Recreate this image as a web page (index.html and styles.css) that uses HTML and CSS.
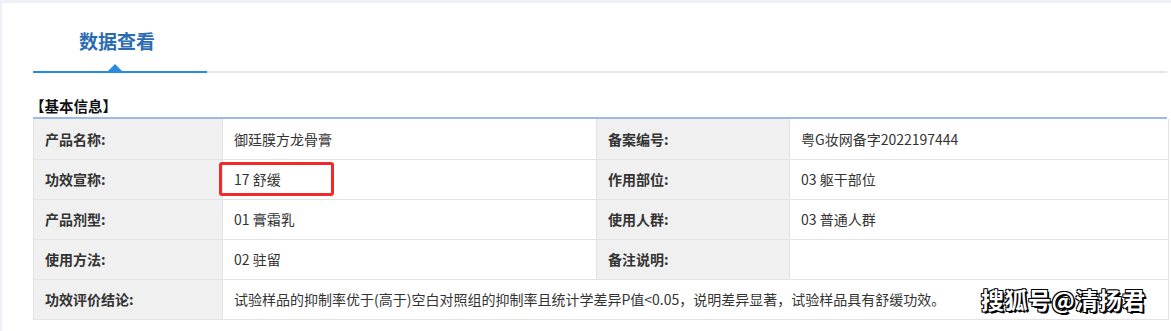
FILE: index.html
```html
<!DOCTYPE html>
<html lang="zh">
<head>
<meta charset="utf-8">
<link rel="stylesheet" href="styles.css">
</head>
<body>
<div class="panel">
  <div class="tabs">
    <div class="tab active">数据查看<span class="caret"></span></div>
  </div>
  <div class="section-title">【基本信息】</div>
  <div class="table-wrap">
    <table class="info">
      <colgroup>
        <col class="c1"><col class="c2"><col class="c3"><col class="c4">
      </colgroup>
      <tr>
        <th>产品名称:</th><td>御廷膜方龙骨膏</td>
        <th>备案编号:</th><td>粤G妆网备字2022197444</td>
      </tr>
      <tr>
        <th>功效宣称:</th><td class="hl-cell"><span class="hl-box"></span>17 舒缓</td>
        <th>作用部位:</th><td>03 躯干部位</td>
      </tr>
      <tr>
        <th>产品剂型:</th><td>01 膏霜乳</td>
        <th>使用人群:</th><td>03 普通人群</td>
      </tr>
      <tr>
        <th>使用方法:</th><td>02 驻留</td>
        <th>备注说明:</th><td></td>
      </tr>
      <tr>
        <th>功效评价结论:</th><td colspan="3">试验样品的抑制率优于(高于)空白对照组的抑制率且统计学差异P值&lt;0.05，说明差异显著，试验样品具有舒缓功效。</td>
      </tr>
    </table>
    <div class="watermark">搜狐号@清扬君</div>
  </div>
</div>
</body>
</html>
```
FILE: styles.css
```css
html, body {
  margin: 0;
  padding: 0;
}
body {
  background: #eef1f5;
  font-family: "Noto Sans CJK SC", "Noto Sans", sans-serif;
  color: #333;
  padding: 3px 0 0 2px;
  height: 331px;
  box-sizing: border-box;
  overflow: hidden;
}
.panel {
  background: #fff;
  padding: 0 4px 0 31px;
  height: 100%;
  box-sizing: border-box;
}
.tabs {
  display: flex;
  border-bottom: 2px solid #e6e6e6;
  height: 68px;
}
.tab {
  position: relative;
  width: 174px;
  box-sizing: border-box;
  padding: 24px 0 0 46px;
  font-size: 19px;
  font-weight: bold;
  color: #2b6cb4;
  line-height: 28px;
  border-bottom: 2px solid #2a8ce0;
  margin-bottom: -2px;
}
.caret {
  position: absolute;
  left: 75px;
  bottom: 0;
  width: 0;
  height: 0;
  border-left: 7px solid transparent;
  border-right: 7px solid transparent;
  border-bottom: 7px solid #2a8ce0;
}
.section-title {
  margin-top: 23px;
  font-size: 14.5px;
  font-weight: bold;
  color: #111;
  line-height: 20px;
  text-indent: -3px;
  border-bottom: 2px solid #9cb9e8;
  padding-bottom: 1px;
}
.table-wrap {
  position: relative;
}
.info {
  border-collapse: collapse;
  width: 1135px;
  table-layout: fixed;
  font-size: 14px;
}
.c1 { width: 189px; }
.c2 { width: 374px; }
.c3 { width: 193px; }
.c4 { width: 379px; }
.info th, .info td {
  border: 1px solid #e3e3e3;
  height: 40px;
  padding: 0 0 0 11px;
  text-align: left;
  vertical-align: middle;
  box-sizing: border-box;
}
.info tr:first-child th, .info tr:first-child td {
  border-top: none;
}
.info th {
  background: #f0f0f0;
  font-weight: bold;
  color: #333;
}
.info td {
  color: #333;
}
.hl-cell {
  position: relative;
}
.hl-box {
  position: absolute;
  left: -4px;
  top: 2px;
  width: 115px;
  height: 34px;
  box-sizing: border-box;
  border: 3px solid #ee2a2a;
  border-radius: 3px;
}
.watermark {
  position: absolute;
  left: 948px;
  top: 163px;
  font-size: 23px;
  font-weight: bold;
  color: #fff;
  letter-spacing: 0.5px;
  text-shadow: 1px 1px 0 #000, -1px -1px 0 #000, 1px -1px 0 #000, -1px 1px 0 #000, 2px 2px 0 #000;
  white-space: nowrap;
}
```
